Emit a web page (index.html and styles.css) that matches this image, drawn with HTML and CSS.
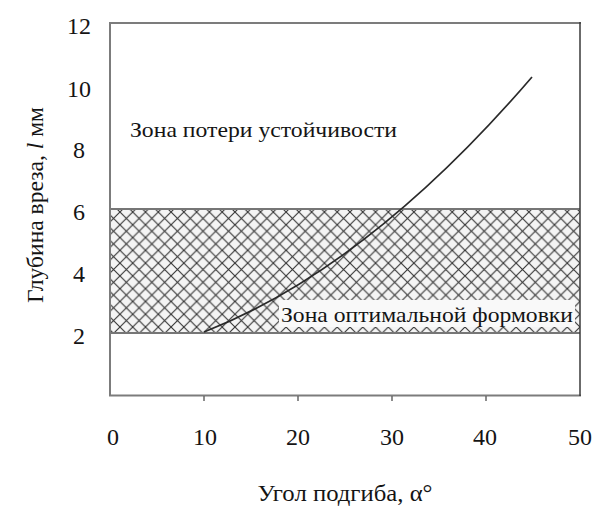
FILE: index.html
```html
<!DOCTYPE html>
<html lang="ru">
<head>
<meta charset="utf-8">
<title>Глубина вреза</title>
<link rel="stylesheet" href="styles.css">
</head>
<body>
<figure class="chart">
<svg class="plot" width="615" height="510" viewBox="0 0 615 510" xmlns="http://www.w3.org/2000/svg">
  <defs>
    <pattern id="hatch" patternUnits="userSpaceOnUse" x="4.92" y="7.5" width="12.78" height="12.78">
      <rect class="hatch-bg" width="12.78" height="12.78"/>
      <path class="hatch-line" d="M0,0 L12.78,12.78 M12.78,0 L0,12.78"/>
    </pattern>
  </defs>

  <rect class="zone-hatch" x="110" y="209" width="470" height="124"/>
  <line class="zone-edge" x1="110" y1="209" x2="580" y2="209"/>
  <line class="zone-edge" x1="110" y1="333" x2="580" y2="333"/>

  <rect class="label-box" x="279" y="300" width="296" height="27"/>
  <text class="label zone-label" x="281" y="322" textLength="292" lengthAdjust="spacingAndGlyphs">Зона оптимальной формовки</text>

  <path class="curve" d="M204,332 Q368,268 532,77"/>

  <text class="label zone-label" x="130" y="137" textLength="267" lengthAdjust="spacingAndGlyphs">Зона потери устойчивости</text>

  <line class="axis" x1="110" y1="23" x2="110" y2="396"/>
  <line class="axis" x1="109" y1="395.5" x2="581" y2="395.5"/>
  <line class="axis" x1="109" y1="23" x2="581" y2="23"/>
  <line class="axis axis-right" x1="580" y1="22" x2="580" y2="396"/>

  <g class="ticks">
    <line x1="204" y1="396" x2="204" y2="401"/>
    <line x1="298" y1="396" x2="298" y2="401"/>
    <line x1="392" y1="396" x2="392" y2="401"/>
    <line x1="486" y1="396" x2="486" y2="401"/>
  </g>

  <g class="tick-label">
    <text class="label" x="79" y="34">12</text>
    <text class="label" x="79" y="96.5">10</text>
    <text class="label" x="79" y="158">8</text>
    <text class="label" x="79" y="220">6</text>
    <text class="label" x="79" y="282">4</text>
    <text class="label" x="79" y="344">2</text>
  </g>

  <g class="tick-label">
    <text class="label" x="113" y="445">0</text>
    <text class="label" x="205" y="445">10</text>
    <text class="label" x="298" y="445">20</text>
    <text class="label" x="392" y="445">30</text>
    <text class="label" x="485" y="445">40</text>
    <text class="label" x="580" y="445">50</text>
  </g>

  <text class="label axis-title" transform="translate(43,205) rotate(-90)" x="0" y="0" textLength="196" lengthAdjust="spacingAndGlyphs">Глубина вреза, <tspan class="italic">l</tspan> мм</text>
  <text class="label axis-title" x="345" y="501" textLength="175" lengthAdjust="spacingAndGlyphs">Угол подгиба, α°</text>
</svg>
</figure>
</body>
</html>
```

FILE: styles.css
```css
html, body {
  margin: 0;
  padding: 0;
  background: #ffffff;
}

.chart {
  margin: 0;
  width: 615px;
  height: 510px;
  overflow: hidden;
}

.plot {
  display: block;
}

.label {
  font-family: "Liberation Serif", "Times New Roman", Times, serif;
  fill: #141414;
}

.hatch-bg {
  fill: #f4f4f4;
}

.hatch-line {
  stroke: #333333;
  stroke-width: 1.1;
  fill: none;
}

.zone-hatch {
  fill: url(#hatch);
}

.zone-edge {
  stroke: #767676;
  stroke-width: 2;
}

.label-box {
  fill: #f9f9f9;
}

.curve {
  fill: none;
  stroke: #2a2a2a;
  stroke-width: 1.7;
}

.axis {
  stroke: #7c7c7c;
  stroke-width: 2;
}

.axis-right {
  stroke: #3a3a3a;
  stroke-width: 1.5;
}

.ticks line {
  stroke: #666666;
  stroke-width: 1.5;
}

.zone-label {
  font-size: 22px;
}

.tick-label text {
  font-size: 24px;
  text-anchor: middle;
}

.axis-title {
  font-size: 23px;
  text-anchor: middle;
}

.italic {
  font-style: italic;
}
```
